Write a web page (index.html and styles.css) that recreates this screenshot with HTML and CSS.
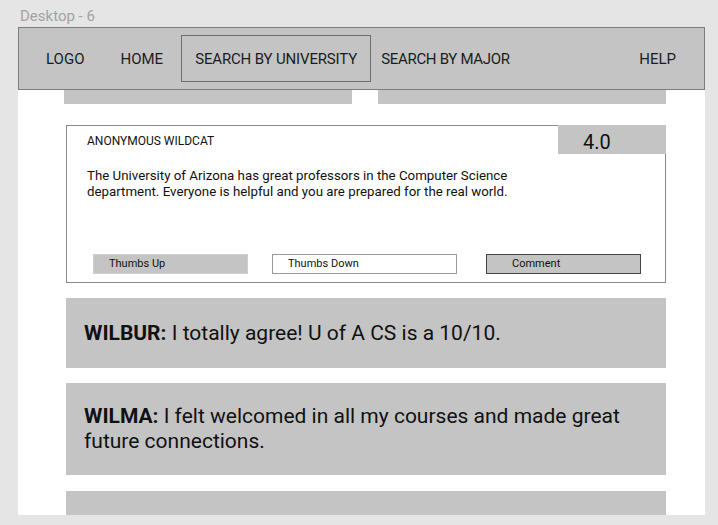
FILE: index.html
```html
<!DOCTYPE html>
<html>
<head>
<meta charset="utf-8">
<link rel="stylesheet" href="styles.css">
</head>
<body>
<div class="label">Desktop - 6</div>
<div class="frame">
  <nav class="nav">
    <span class="nav-item logo">LOGO</span>
    <span class="nav-item home">HOME</span>
    <span class="nav-item active">SEARCH BY UNIVERSITY</span>
    <span class="nav-item major">SEARCH BY MAJOR</span>
    <span class="nav-item help">HELP</span>
  </nav>
  <div class="peek">
    <div class="peek-bar"></div>
    <div class="peek-bar"></div>
  </div>
  <div class="review">
    <div class="rating">4.0</div>
    <div class="reviewer">ANONYMOUS WILDCAT</div>
    <p class="review-text">The University of Arizona has great professors in the Computer Science department. Everyone is helpful and you are prepared for the real world.</p>
    <div class="actions">
      <div class="btn btn-up">Thumbs Up</div>
      <div class="btn btn-down">Thumbs Down</div>
      <div class="btn btn-comment">Comment</div>
    </div>
  </div>
  <div class="comment comment-short"><p><b>WILBUR:</b> I totally agree! U of A CS is a 10/10.</p></div>
  <div class="comment comment-long"><p><b>WILMA:</b> I felt welcomed in all my courses and made great future connections.</p></div>
  <div class="comment comment-cut"></div>
</div>
</body>
</html>
```

FILE: styles.css
```css
* { box-sizing: border-box; }
html, body { margin: 0; }
body {
  background: #e5e5e5;
  padding: 7px 0 0 18px;
  font-family: Roboto, "Liberation Sans", sans-serif;
  height: 525px;
  overflow: hidden;
}
.label {
  margin-left: 2px;
  height: 20px;
  line-height: 18px;
  font-size: 15px;
  color: #a3a3a3;
}
.frame {
  width: 687px;
  height: 488px;
  background: #fff;
  overflow: hidden;
  display: flex;
  flex-direction: column;
}
.nav {
  flex: none;
  height: 63px;
  background: #c4c4c4;
  border: 1px solid #7c7c7c;
  display: flex;
  align-items: center;
  padding: 0 28px 0 27px;
  font-size: 15px;
  color: #1c1c1c;
}
.nav-item { line-height: 18px; white-space: nowrap; }
.home { margin-left: 36px; }
.active {
  margin-left: 18px;
  width: 190px;
  height: 47px;
  border: 1px solid #6e6e6e;
  display: flex;
  align-items: center;
  justify-content: center;
  letter-spacing: -0.15px;
}
.major { margin-left: 10px; letter-spacing: -0.3px; }
.help { margin-left: auto; }
.peek {
  flex: none;
  display: flex;
  gap: 26px;
  margin-left: 46px;
  height: 14px;
}
.peek-bar { width: 288px; background: #c4c4c4; }
.review {
  flex: none;
  position: relative;
  margin: 21px 0 0 48px;
  width: 600px;
  height: 158px;
  border: 1px solid #8a8a8a;
  padding: 8px 24px 8px 20px;
  display: flex;
  flex-direction: column;
  color: #111;
}
.rating {
  position: absolute;
  top: -1px;
  right: -1px;
  width: 108px;
  height: 29px;
  background: #c4c4c4;
  font-size: 20px;
  line-height: 23px;
  padding: 6px 0 0 25px;
}
.reviewer { font-size: 12px; line-height: 15px; }
.review-text {
  margin: 19px 0 0;
  max-width: 450px;
  font-size: 13.3px;
  line-height: 16px;
}
.actions {
  margin-top: auto;
  padding-left: 6px;
  display: flex;
  font-size: 11px;
}
.btn {
  height: 20px;
  line-height: 18px;
  border: 1px solid #c4c4c4;
  padding-left: 15px;
}
.btn-up { width: 155px; background: #c4c4c4; border-color: #cfcfcf; }
.btn-down { width: 185px; margin-left: 24px; background: #fff; border-color: #9a9a9a; }
.btn-comment { width: 155px; margin-left: 29px; background: #c4c4c4; border-color: #444; padding-left: 25px; }
.comment {
  flex: none;
  margin: 15px 0 0 48px;
  width: 600px;
  background: #c4c4c4;
  display: flex;
  align-items: center;
  padding: 0 18px;
  color: #111;
}
.comment p { margin: 0; font-size: 21px; line-height: 25px; }
.comment-short { height: 70px; }
.comment-long { height: 92px; }
.comment-cut { height: 60px; margin-top: 16px; }
```
